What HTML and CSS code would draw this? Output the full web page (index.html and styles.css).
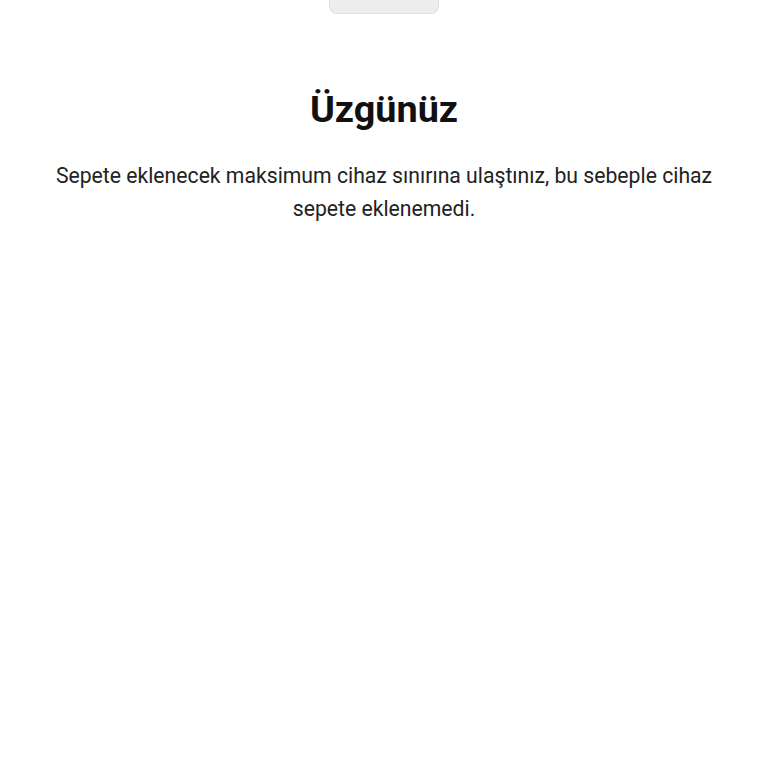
FILE: index.html
```html
<!DOCTYPE html>
<html lang="tr">
<head>
<meta charset="utf-8">
<link rel="stylesheet" href="styles.css">
</head>
<body>
<div class="page">
  <div class="handle"></div>
  <h1 class="title">Üzgünüz</h1>
  <p class="message">Sepete eklenecek maksimum cihaz sınırına ulaştınız, bu sebeple cihaz sepete eklenemedi.</p>
</div>
</body>
</html>
```
FILE: styles.css
```css
html, body {
  margin: 0;
  padding: 0;
  background: #ffffff;
}
.page {
  width: 768px;
  height: 768px;
  display: flex;
  flex-direction: column;
  align-items: center;
  font-family: Roboto, "Noto Sans", sans-serif;
  color: #1a1a1a;
}
.handle {
  width: 110px;
  height: 14px;
  background: #ededed;
  border: 1px solid #e0e0e0;
  border-top: none;
  border-radius: 0 0 8px 8px;
  box-sizing: border-box;
}
.title {
  margin: 73px 0 0 0;
  font-size: 37.8px;
  font-weight: 700;
  line-height: 44px;
  color: #111111;
}
.message {
  margin: 28px 0 0 0;
  padding: 0 40px;
  font-size: 21.2px;
  line-height: 33px;
  text-align: center;
  color: #222222;
}
```
